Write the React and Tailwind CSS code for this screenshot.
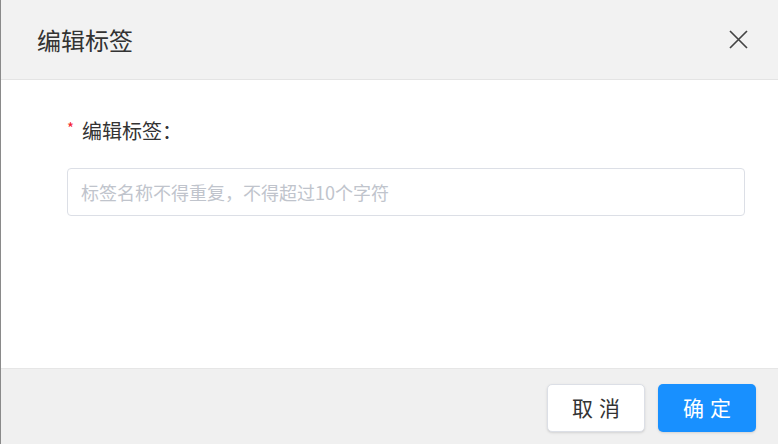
export default function App() {
  return (
    <div
      className="w-[778px] h-[444px] flex flex-col bg-white border-l border-[#8a8a8a] overflow-hidden"
      style={{ fontFamily: '"Noto Sans CJK SC", "Liberation Sans", sans-serif' }}
    >
      {/* Header */}
      <div className="h-[80px] shrink-0 flex items-center justify-between pl-[36px] pr-[30px] bg-[#f2f2f2] border-b border-[#e4e4e4]">
        <h1 className="text-[24px] text-[#333333] font-normal leading-none">编辑标签</h1>
        <svg width="19" height="19" viewBox="0 0 19 19" className="text-[#444444]">
          <path d="M1 1L18 18M18 1L1 18" stroke="currentColor" strokeWidth="1.7" fill="none" />
        </svg>
      </div>

      {/* Body */}
      <div className="flex-1 pl-[66px] pr-[33px] pt-[37px]">
        <div className="flex items-center text-[20px] text-[#333333] leading-[28px]">
          <span className="text-[#f5222d] text-[15px] mr-[8px] -mt-[6px]">*</span>
          编辑标签：
        </div>
        <input
          type="text"
          placeholder="标签名称不得重复，不得超过10个字符"
          className="mt-[23px] w-full h-[48px] px-[13px] rounded-[4px] border border-[#dcdfe6] text-[18px] text-[#333333] placeholder-[#c0c4cc] outline-none"
        />
      </div>

      {/* Footer */}
      <div className="h-[76px] shrink-0 flex items-start justify-end gap-[13px] pt-[15px] pr-[22px] bg-[#f0f0f0] border-t border-[#e6e6e6]">
        <button className="w-[98px] h-[48px] rounded-[5px] bg-white border border-[#dcdfe6] shadow-sm text-[21px] text-[#333333] tracking-[6px] pl-[6px]">
          取消
        </button>
        <button className="w-[98px] h-[48px] rounded-[5px] bg-[#1890ff] shadow-sm text-[21px] text-white tracking-[6px] pl-[6px]">
          确定
        </button>
      </div>
    </div>
  )
}
